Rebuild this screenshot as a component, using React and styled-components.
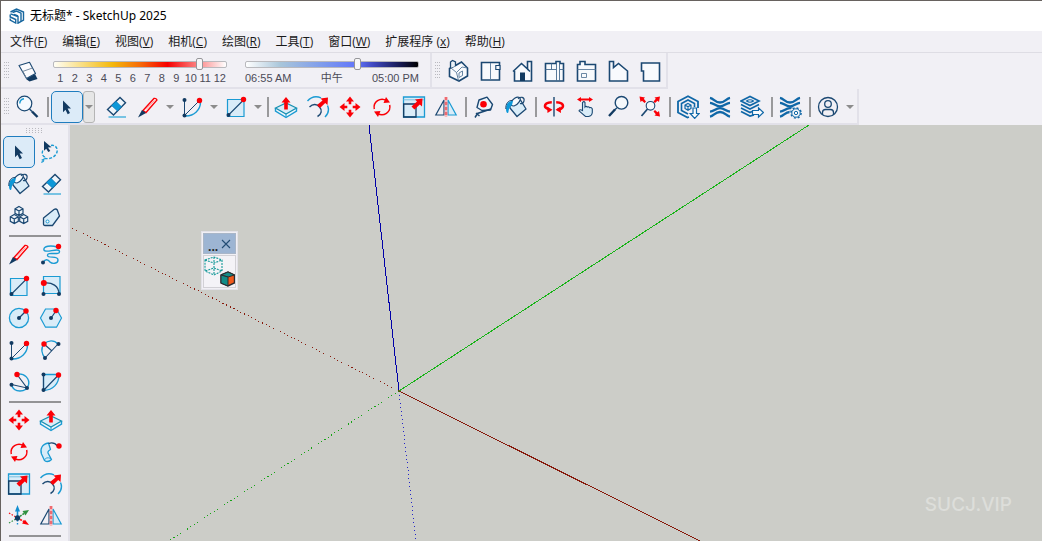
import React, { useState } from "react";
import styled, { createGlobalStyle, css } from "styled-components";

const NAVY = "#1b4872";
const DARK = "#123a61";
const CYAN = "#1b9bd3";
const PALE = "#d9ecf8";
const RED = "#fb0007";
const BLUE = "#0f67a7";

const Global = createGlobalStyle`
  *, *::before, *::after { box-sizing: border-box; }
  html, body { margin: 0; padding: 0; overflow: hidden; }
  button { font: inherit; color: inherit; }
`;

const Shell = styled.div`
  height: 100vh;
  display: flex;
  flex-direction: column;
  overflow: hidden;
  background: #f1f0f5;
  border-top: 1px solid #67625f;
  border-left: 1px solid #67625f;
  color: #1a1a1a;
  font-family: "Open Sans", "Noto Sans CJK SC", sans-serif;
  font-size: 12px;
`;

const TitleBar = styled.header`
  flex: none;
  height: 30px;
  display: flex;
  align-items: center;
  gap: 5px;
  padding-left: 8px;
  background: #fff;
`;

const Title = styled.h1`
  margin: 0;
  font-family: "Noto Sans", "Noto Sans CJK SC", sans-serif;
  font-size: 12px;
  line-height: 16px;
  font-weight: 400;
  color: #000;
`;

const MenuBar = styled.nav`
  flex: none;
  height: 22px;
  display: flex;
  align-items: center;
  gap: 15px;
  padding-left: 9px;
  border-bottom: 1px solid #dedde4;
`;

const MenuItem = styled.button`
  flex: none;
  padding: 0;
  border: 0;
  background: none;
  line-height: 20px;
  white-space: nowrap;
`;

const ToolRow = styled.div`
  flex: none;
  display: flex;
  height: 36px;
`;

const ToolBar = styled.div`
  display: flex;
  align-items: center;
  flex: none;
  border-right: 2px solid #e2e1e9;
  border-bottom: 2px solid #e2e1e9;
  padding-top: 2px;
  padding-right: ${(p) => p.$end || 0}px;
`;

const dots = css`
  background-image: conic-gradient(at 1px 1px, transparent 75%, #b9b9bf 0);
`;

const Grip = styled.span`
  flex: none;
  width: 5px;
  height: 18px;
  margin: 0 2px 0 3px;
  ${dots}
  background-size: 2px 3px;
`;

const SideGrip = styled.span`
  flex: none;
  width: 17px;
  height: 5px;
  margin: 3px auto;
  ${dots}
  background-size: 3px 2px;
`;

const ToolButton = styled.button`
  flex: none;
  display: grid;
  place-items: center;
  width: 32px;
  height: 32px;
  padding: 0;
  border: ${(p) => (p.$active ? "1px solid #1f7dbf" : "0")};
  border-radius: 5px;
  background: ${(p) => (p.$active ? "#dcebf8" : "transparent")};
`;

const MenuArrow = styled.button`
  flex: none;
  display: grid;
  place-items: center;
  width: 12px;
  height: 32px;
  padding: 0;
  border: ${(p) => (p.$boxed ? "1px solid #b5b5b5" : "0")};
  border-radius: 3px;
  background: ${(p) => (p.$boxed ? "#e6e6e6" : "transparent")};
  margin-right: ${(p) => (p.$boxed ? 5 : 0)}px;
  &::after {
    content: "";
    border: 4px solid transparent;
    border-top-color: #8c8c8c;
    border-bottom: 0;
  }
`;

const Divider = styled.span`
  flex: none;
  width: ${(p) => (p.$wide ? 2 : 2)}px;
  height: 20px;
  margin: 0 ${(p) => (p.$wide ? 2 : 1)}px 0 ${(p) => (p.$wide ? 4 : 3)}px;
  background: #99999b;
`;

const Scale = styled.label`
  flex: none;
  width: 174px;
  margin-left: ${(p) => p.$gap}px;
  display: flex;
  flex-direction: column;
  gap: 1px;
  color: #4b4a57;
  font-family: "Liberation Sans", "Noto Sans CJK SC", sans-serif;
  font-size: 11px;
  line-height: 12px;
`;

const Slider = styled.input`
  appearance: none;
  display: block;
  width: 100%;
  height: 12px;
  margin: 0;
  background: none;
  &::-webkit-slider-runnable-track {
    height: 7px;
    border: 1px solid #b9b9bd;
    border-radius: 2px;
    background: ${(p) => p.$track};
  }
  &::-webkit-slider-thumb {
    appearance: none;
    width: 7px;
    height: 12px;
    margin-top: -4px;
    border: 1px solid #96969a;
    border-radius: 2px;
    background: #f7f7f8;
  }
`;

const Marks = styled.span`
  display: flex;
  justify-content: ${(p) => (p.$even ? "stretch" : "space-between")};
  height: 12px;
  white-space: nowrap;
  span { ${(p) => p.$even && "flex: 1 1 0; text-align: center;"} }
`;

const Body = styled.div`
  flex: 1;
  min-height: 0;
  display: flex;
`;

const Sidebar = styled.aside`
  flex: none;
  width: 69px;
  display: flex;
  flex-direction: column;
  overflow: hidden;
  border-right: 2px solid #e2e1e9;
`;

const ToolGrid = styled.div`
  flex: none;
  display: grid;
  grid-template-columns: 32px 32px;
  grid-auto-rows: 32px;
  margin-left: 2px;
`;

const SideRule = styled.hr`
  flex: none;
  width: 52px;
  height: 2px;
  margin: 3px 0 1px 8px;
  border: 0;
  background: #939395;
`;

const Viewport = styled.main`
  position: relative;
  flex: 1;
  min-width: 0;
  overflow: hidden;
  background: #cccdc8;
`;

const Scene = styled.svg`
  display: block;
  width: 100%;
  height: 100%;
`;

const Palette = styled.section`
  position: absolute;
  left: 131px;
  top: 106px;
  width: 37px;
  padding: 1px;
  border: 1px solid #e3e2e8;
  background: #f1f0f5;
`;

const PaletteHead = styled.header`
  display: flex;
  align-items: center;
  justify-content: space-between;
  height: 21px;
  padding: 0 4px;
  background: #9db5d3;
  border: 1px solid #a9b6c8;
  color: #222;
  font-size: 12px;
  line-height: 12px;
  font-weight: 700;
`;

const Ellipsis = styled.span`
  align-self: flex-end;
`;

const CloseButton = styled.button`
  display: grid;
  place-items: center;
  width: 10px;
  height: 12px;
  padding: 0;
  border: 0;
  background: none;
`;

const PaletteTool = styled.button`
  display: block;
  width: 100%;
  height: 33px;
  margin-top: 1px;
  padding: 0;
  border: 1px solid #d2d1d6;
  background: #f4f3f7;
`;

const Watermark = styled.p`
  position: absolute;
  right: 30px;
  bottom: 24px;
  margin: 0;
  color: #dddeda;
  font: 500 19px/24px Inter, sans-serif;
`;

const P = ({ d, s = NAVY, w = 1.4, f = "none", ...rest }) => (
  <path d={d} stroke={s} strokeWidth={w} fill={f} {...rest} />
);
const Dot = ({ x, y, c = DARK, r = 2 }) => <circle cx={x} cy={y} r={r} fill={c} />;
const RDot = ({ x, y }) => <Dot x={x} y={y} c={RED} r={2.7} />;
const Fill = ({ d, c = RED }) => <path d={d} fill={c} />;

const waves = (
  <g stroke={BLUE} strokeWidth="2.300">
    <path d="M2 2.800C6 3.500 7 7.500 12 7.500S18 3.500 22 2.800" />
    <path d="M2 7.800C6 8 7.500 11.300 12 11.300S18 8 22 7.800" />
    <path d="M2 16.700C6 16.500 7.500 13.200 12 13.200S18 16.500 22 16.700" />
    <path d="M2 21.700C6 21 7 17 12 17S18 21 22 21.700" />
  </g>
);

const ICONS = {
  search: <>
    <circle cx="9.500" cy="8.500" r="7.300" stroke={NAVY} strokeWidth="1.200" fill="#f6fafe" />
    <P d="M4.800 8.500A4.800 4.800 0 0 1 9 3.800" s={CYAN} />
    <P d="M14.500 14L17 16.500" /><P d="M17 16.500L22.500 22" w={2.4} s={DARK} />
  </>,
  select: <Fill c={DARK} d="M8 5.500L16 13.500H12.600L15 18L12.700 19.200L10.500 14.700L8 17.200Z" />,
  lasso: <>
    <P d="M12 5.500C16 4.500 19 8 18 12C17 16 12 19.500 7 18.500C5 18 5.500 20 4 21.500C2.500 22.500 1.500 21.500 2.500 20.500C4 19 6 20 5.500 17C3.500 16 2.500 13 4 10" s={CYAN} w={1.4} strokeDasharray="3 1.600" />
    <Fill c={DARK} d="M5 1L12.500 7.300L9 7.500L11.300 11L9.300 12L7.200 8.800L5 10.800Z" />
  </>,
  eraser: <>
    <P d="M3.500 14.500L16 2.500L21.500 7.800L9.500 20Z" f="#eef5fa" />
    <P d="M7.500 10.500L12 6.300L17.500 11.800L13.500 16Z" f="#0c98d8" s="#0c7dbd" w={0.7} />
    <P d="M4.500 22H22" s="#63bbe0" w={1.7} />
  </>,
  pencil: <>
    <P d="M7 15.500L18 3.500Q20 3 21 5L10 17.500Z" s={RED} w={1.4} f="#fff6f6" />
    <P d="M10 14.500L18.500 5.500" s="#fb7479" w={0.7} />
    <Fill c={DARK} d="M2 22.500L6 15L10 18Z" />
  </>,
  arc: <>
    <P d="M4.500 5V20.500M4.500 20.500L19 6" w={1} />
    <P d="M20.500 7C20.500 15 14 21 6 21" s={CYAN} w={1.4} />
    <Dot x={4.5} y={5} /><Dot x={4.5} y={20.5} /><RDot x={19.500} y={5.500} />
  </>,
  rect: <>
    <P d="M3.500 4.500H20V21.500H3.500Z" s={CYAN} w={1.2} f={PALE} />
    <P d="M4.500 20L19 5.500" w={1.1} /><Dot x={4.5} y={20} /><RDot x={19.500} y={4.500} />
  </>,
  push: <>
    <P d="M1.500 13V16L12 22.500L22.500 16V13" s={CYAN} w={1.4} f="#eef6fb" />
    <P d="M1.500 13L12 8L22.500 13L12 19Z" s="#168fb0" f={PALE} w={1.2} />
    <P d="M12 19V22" s={CYAN} w={1} />
    <Fill d="M12 2L16.500 7.500H13.800V14.500H10.200V7.500H7.500Z" />
  </>,
  offset: <>
    <P d="M1.500 6C5 2 10 .8 15 2.800" s={CYAN} w={1.4} /><P d="M21.500 10.500C23.500 15 22 19 19 22" s={CYAN} w={1.4} />
    <P d="M3.500 12C7 8.500 11 9 13.500 12C16.500 15 15.500 19.500 11.500 21.500" w={1.4} />
    <Fill d="M22 2.500L21.500 10L19.200 8L14 13L11 10L16.500 5.500L14.500 3.500Z" />
  </>,
  move: <Fill d="M12 1.500L16 6.500H13.300V9.300H10.700V6.500H8ZM12 22.500L16 17.500H13.300V14.700H10.700V17.500H8ZM1.500 12L6.500 8V10.700H9.300V13.300H6.500V16ZM22.500 12L17.500 8V10.700H14.700V13.300H17.500V16Z" />,
  rotate: <>
    <P d="M4.300 14A8 8 0 0 1 16.500 5.600M19.700 10A8 8 0 0 1 7.500 18.400" s={RED} w={1.5} />
    <Fill d="M16 2L20 7.500L13.500 8ZM8 22L4 16.500L10.500 16Z" />
  </>,
  scale: <>
    <P d="M1.500 2H22.500V22H1.500Z" s={CYAN} w={1.3} f={PALE} />
    <P d="M1.500 4.800H22" s="#79c0df" w={1} />
    <P d="M1.700 9H14V22H1.700Z" s={DARK} w={1.3} />
    <Fill d="M20.500 3.500L20 11.500L17.800 9.500L12.500 14.500L9.500 11.500L15 6.500L13 4.500Z" />
  </>,
  flip: <>
    <P d="M10 5V20H1.800Z" w={1.2} /><P d="M14 5V20H22.200Z" s={CYAN} f={PALE} w={1.2} />
    <P d="M12 2V22" s="#f9b9bd" w={2.6} /><P d="M12 2V22" s="#ef6a70" w={2.6} strokeDasharray="3 2" />
  </>,
  tape: <>
    <P d="M7 5L15 2.200L20.500 9.500L18.500 15L10 15.500L5 12.500Z" w={1.4} f="#edf4fa" strokeLinejoin="round" />
    <P d="M19 14L5.500 18.500L3 22.500M4 18L7.500 21" w={1.5} /><Dot x={11.500} y={9.200} c={RED} r={3.3} />
  </>,
  paint: <>
    <P d="M6 8L16.500 5L22 14L13 21.500L6 13Z" w={1.3} f={PALE} strokeLinejoin="round" />
    <P d="M6.500 8.500C8 4 13 1 15.500 2.500C18 4 14 10 10 11C7.500 11 6 10 6.500 8.500Z" w={1.2} f="#f6fafd" />
    <P d="M14 4C16 1 21 2 20 6C19.500 8 18 9 16 8.500" w={1.1} />
    <Fill c="#0c98d8" d="M9 6C4 6 2 9 2 14C2 18 4 19.500 4.500 16.500C5 13 6 11.500 8 10Z" />
    <P d="M8.500 5.500C4 5 1.500 9 1.800 14" w={1} />
  </>,
  orbit: <>
    <P d="M9.800 7.300C5 7.500 3 9 3 11Q3 13 6.500 14M14.200 7.300C19 7.500 21 9 21 11S18 14.500 15.500 14.600" s={RED} w={2.6} />
    <Fill d="M5 11.500L10.500 14.700L5.500 18ZM19 18L13.500 14.700L18.500 11.500Z" />
    <P d="M12 2V21.500" w={1.4} />
  </>,
  pan: <>
    <P d="M8.500 14.500V7.500Q10 5.800 11 7.500V12Q12 10.800 13.300 12Q14.800 11.300 15.500 12.700Q17.700 12 18.300 14V17.500Q18 21 14.500 21.500H11.500L5 15.800Q5.500 13.800 8.500 15.500Z" w={1.1} f={PALE} />
    <Fill d="M3 4.500L7 2V3.600H15V2L19 4.500L15 7V5.400H7V7Z" />
  </>,
  zoom: <>
    <circle cx="15.500" cy="7.800" r="6.300" stroke={NAVY} strokeWidth="1.400" fill="#f5f8fb" />
    <P d="M10.800 13L8 15.500" /><P d="M9 14.500L3 21" w={2.4} s={DARK} />
  </>,
  extents: <>
    <circle cx="12.500" cy="10.800" r="4.300" stroke={NAVY} strokeWidth="1.100" fill="#f5f8fb" />
    <P d="M9.500 14L3.500 21" w={1.7} />
    <Fill d="M1.500 1.500L7 2.500L5.800 3.800L8 6.500L6.500 8L4 5.700L2.500 7ZM22 1.500L16.500 2.500L17.800 3.800L15.500 6.500L17 8L19.500 5.700L21 7ZM22 21.500L16.500 20.500L17.800 19.200L15.500 16.500L17 15L19.500 17.300L21 16Z" />
  </>,
  warehouse: <>
    <P d="M13 22L11.500 22.500L2 17.500V6.500L12 1.300L22 6.500V13" s={BLUE} w={1.800} />
    <P d="M12 19L5.500 15.500V8.500L12 5L18.500 8.500V12" s={BLUE} w={1.600} />
    <P d="M12 8.500L15 10V13.500L12 15.300L9 13.500V10ZM9 10L12 11.700L15 10M12 11.700V15" s={BLUE} w={1.200} />
    <P d="M17 13H20.500V18.500H23.200L18.700 23.400L14.200 18.500H17Z" s={BLUE} w={1.200} f="#f8fafc" />
  </>,
  extensions: waves,
  layers: <>
    <P d="M1 6L10 1.500L19 6L10 10.500ZM1 9.500L10 14L19 9.500M1 13L10 17.500L12 16.500M1 16.500L10 21L14 20" s={BLUE} w={1.7} />
    <P d="M6.500 6Q10 3.500 13.500 6Q10 8.500 6.500 6Z" s={BLUE} w={1.1} />
    <P d="M12.500 15.500H18.500V12.800L23.400 17.500L18.500 22.200V19.500H12.500Z" s={BLUE} w={1.2} f="#f8fafc" />
  </>,
  manager: <>
    {waves}
    <circle cx="18" cy="18" r="6.500" fill="#f1f0f5" />
    <circle cx="18" cy="18" r="5.100" stroke={BLUE} strokeWidth="1.500" strokeDasharray="2 2" fill="none" />
    <circle cx="18" cy="18" r="4.200" stroke={BLUE} strokeWidth="1" fill="#f5f8fb" />
    <circle cx="18" cy="18" r="1.700" stroke={BLUE} strokeWidth="1" fill="none" />
  </>,
  user: <>
    <circle cx="12" cy="12" r="9.500" stroke={NAVY} strokeWidth="1.300" fill="none" />
    <circle cx="12" cy="9" r="3.300" stroke={NAVY} strokeWidth="1.300" fill="none" />
    <P d="M6.500 19V17.500Q6.500 14.500 9.500 14.500H14.500Q17.500 14.500 17.500 17.500V19" w={1.300} />
  </>,
  shadow: <>
    <Fill c={DARK} d="M11 20L20 15L22.500 20L14.500 22.500Z" />
    <P d="M4 6.500L14.500 3.200L20.500 14.500L11.500 19.500Z" w={1.1} f="#fbfbfd" strokeLinejoin="round" />
    <P d="M7.500 12.500L17.500 9M8 12.500L11.500 19.500" s="#6a7f96" w={0.9} />
  </>,
  iso: <>
    <P d="M3.500 9.500L9.500 6.500L15.500 3L21.500 9V17L13 22L3.500 17.500Z" w={1.6} f="#f8fafd" />
    <P d="M4.500 9V3L6.500 1.500L9.500 3V7" w={1.3} f="#eaf1f7" />
    <P d="M5 9L10.500 13.500L16 8L21 9M10.500 13.500L12.500 21.500M13 14V18.500L16.500 16.500V12Z" s="#567899" w={0.9} />
  </>,
  top: <>
    <P d="M3.500 3.500H21.500V21H3.500Z" w={1.6} f="#f8fafd" /><P d="M12.500 4V21" s="#5a7b9b" w={0.9} />
    <P d="M17.800 6.500H22V10.500H17.800Z" w={1.1} f="#f8fafd" />
  </>,
  front: <>
    <P d="M3 12.500L11.500 4.500L17.500 10V2.500H21.500V22H4.500V12" w={1.6} f="#f8fafd" />
    <P d="M17.500 10L20 12.500" /><Fill c={DARK} d="M10 13.500H15V22H10Z" />
  </>,
  right: <>
    <P d="M3.500 4.500H14V2.500H18V4.500H21.500V22H3.500Z" w={1.6} f="#f8fafd" />
    <P d="M3.500 10.500H14M9.500 4.500V10.500M14.500 4V22M17.500 4V22M18 10.500H21.500" s="#466b8e" w={0.9} />
  </>,
  back: <>
    <P d="M3.500 5.500H6V2.500H11V5.500H21.500V22H3.500Z" w={1.6} f="#f8fafd" />
    <P d="M3.500 10.500H21.500M7.500 14.500H12.500V18.500H7.500Z" s="#5a7b9b" w={0.9} />
  </>,
  left: <P d="M3.500 22V2.500H7.500V8.500L12.500 4.500L21.500 12V22Z" w={1.6} f="#f8fafd" />,
  bottom: <P d="M3.500 4H21.500V22H5.500V12H3.500Z" w={1.6} f="#f8fafd" />,
  components: <>
    {[[12, 2.500], [7.300, 10.500], [16.700, 10.500]].map(([x, y]) => (
      <P key={x} d={`M${x} ${y}l4 2.300v4.500l-4 2.300l-4-2.300v-4.500zM${x - 4} ${y + 2.300}l4 2.300l4-2.300M${x} ${y + 4.600}v4.500`} w={1.2} f="#edf4fa" />
    ))}
  </>,
  tag: <>
    <P d="M4.500 14L15 5.500Q17 4.300 18.300 6L20.500 12L13.500 21.500L6 21.500Q4.500 21.500 4.500 20Z" w={1.3} f={PALE} strokeLinejoin="round" />
    <circle cx="8.500" cy="17.500" r="1.500" stroke={CYAN} fill="#fff" />
  </>,
  freehand: <>
    <P d="M18 5C12 3 4 4 5 8C6 12 20 5 20.500 9.500C21 14 8 9 8.500 13.500C9 17 19 13 19 18C19 22 13 22 11 20C9 17 6 17 4.500 20" s={CYAN} w={1.4} />
    <Dot x={4} y={20.500} /><RDot x={19.500} y={4.500} />
  </>,
  rotrect: <>
    <P d="M4.500 2.500H21V19.500H4.500Z" s={CYAN} f={PALE} w={1.200} /><P d="M5 9C13 8 20 12 20 20" w={1.3} />
    <Dot x={4.5} y={20} /><Dot x={20} y={20} /><Dot x={4.8} y={9} c={RED} r={3} />
  </>,
  circle: <>
    <circle cx="12" cy="12" r="9.600" stroke={CYAN} strokeWidth="1.300" fill={PALE} />
    <P d="M12 12L19 5" w={1.200} /><Dot x={12} y={12} /><RDot x={19} y={5} />
  </>,
  polygon: <>
    <P d="M6.500 3H17.500L22.500 12L17.500 21.200H6.500L1.500 12Z" s={CYAN} f={PALE} w={1.200} />
    <P d="M12 12L17 5" w={1.200} /><Dot x={12} y={12} /><RDot x={17} y={4.500} />
  </>,
  arc2: <>
    <P d="M19 6C15 1.500 9 2 5 6C1.500 10 2.500 16 6 20" s={CYAN} w={1.300} />
    <P d="M19 6L6 20M5 6L13 13" w={1.1} /><RDot x={5} y={6} /><Dot x={19.500} y={6} /><Dot x={6} y={20} />
  </>,
  arc3: <>
    <P d="M10 4C18 3 23 9 21.500 15C19 23 7 23 4.500 15" s={CYAN} w={1.4} />
    <P d="M4.500 14.500L20 18L10 4.500" w={1.1} /><RDot x={10} y={4.500} /><Dot x={4.500} y={14.800} /><Dot x={20} y={18} />
  </>,
  pie: <>
    <P d="M4.500 4.500H20C20 14 14 20 4.500 20.500Z" s={CYAN} w={1.3} f={PALE} />
    <P d="M4.500 4.500V20.500L19.500 5" w={1.2} /><Dot x={4.500} y={4.500} /><Dot x={4.500} y={20} /><RDot x={19.500} y={5} />
  </>,
  follow: <>
    <P d="M9.500 3C3 4 .8 9 2.500 14L5.500 20.500Q9 23 12.500 19.500L9 13Q8.500 11 11.500 9.500Z" s={CYAN} f={PALE} w={1.300} strokeLinejoin="round" />
    <P d="M5.500 20Q7 16.500 12 18.500" s={CYAN} w={0.9} />
    <P d="M9.500 3.500Q15 1.500 18.500 6" w={1.3} /><Dot x={20} y={6} c={RED} r={2.7} />
  </>,
  axes: <>
    <P d="M10.500 14V7" s="#148ed0" w={1.6} /><Fill c="#148ed0" d="M10.500 1L13 7.500H8Z" />
    <P d="M10.500 14L17 9.500" s="#2f9140" w={1.6} strokeDasharray="2 1" /><Fill c="#2f9140" d="M22 6L18.500 11.500L15.500 7Z" />
    <P d="M10.500 14L17 17.500" s={RED} w={1.6} strokeDasharray="2 1" /><Fill d="M22 21L15 19.500L18 15.800Z" />
    <P d="M2 9L9 13" s={RED} w={1.2} strokeDasharray="1.500 1.500" />
    <P d="M2 19L9 15" s="#2f9140" w={1.2} strokeDasharray="1.500 1.500" />
    <P d="M10.500 16V22" s="#148ed0" w={1.4} strokeDasharray="1.500 1.500" />
    <Dot x={10.500} y={14} r={2.700} />
  </>,
};

const Icon = ({ name }) => (
  <svg width="24" height="24" viewBox="0 0 24 24" fill="none" aria-hidden="true">{ICONS[name]}</svg>
);

const Logo = () => (
  <svg width="16" height="16" viewBox="0 0 16 16" fill="none" stroke="#17679f" strokeWidth="1.400" aria-hidden="true">
    <path d="M1.500 4L7.500 1L14.500 4V12L9 15.200V8.500L1.500 5.800" />
    <path d="M3.500 4.500L7.500 3L12 5.200V13.500" />
    <path d="M1.200 6.500V9L6.700 11.500V15L1.200 12V10.500" />
    <path d="M9 8L5 6.500" />
  </svg>
);

const MENUS = [
  ["文件(", "F"], ["编辑(", "E"], ["视图(", "V"], ["相机(", "C"], ["绘图(", "R"],
  ["工具(", "T"], ["窗口(", "W"], ["扩展程序 (", "x"], ["帮助(", "H"],
];

const VIEWS = ["iso", "top", "front", "right", "back", "left", "bottom"];

const MAIN_TOOLS = [
  "search", "||", "select", "vv", "eraser", "pencil", "v", "arc", "v", "rect", "v", "|",
  "push", "offset", "move", "rotate", "scale", "flip", "|", "tape", "paint", "|",
  "orbit", "pan", "zoom", "extents", "|", "warehouse", "extensions", "layers", "|",
  "manager", "|", "user", "v",
];

const SIDE_GROUPS = [
  ["select", "lasso", "paint", "eraser", "components", "tag"],
  ["pencil", "freehand", "rect", "rotrect", "circle", "polygon", "arc", "arc2", "arc3", "pie"],
  ["move", "push", "rotate", "follow", "scale", "offset", "axes", "flip"],
];

const MONTHS = Array.from({ length: 12 }, (_, i) => i + 1);

export default function App() {
  const [tool, setTool] = useState("select");
  const button = (name) => (
    <ToolButton key={name} type="button" aria-label={name} $active={tool === name} onClick={() => setTool(name)}>
      <Icon name={name} />
    </ToolButton>
  );

  return (
    <>
      <Global />
      <Shell>
        <TitleBar><Logo /><Title>无标题* - SketchUp 2025</Title></TitleBar>
        <MenuBar>
          {MENUS.map(([text, key]) => (
            <MenuItem key={key} type="button">{text}<u>{key}</u>)</MenuItem>
          ))}
        </MenuBar>
        <ToolRow>
          <ToolBar $end={11}>
            <Grip />
            {button("shadow")}
            <Scale $gap={10}>
              <Slider type="range" min="0" max="1000" defaultValue="860" aria-label="month"
                $track="linear-gradient(90deg,#fffef5,#f9dd7e 17%,#f4b80b 34%,#f66b08 50%,#f70000 66%,#fb7a7a 82%,#fff)" />
              <Marks $even>{MONTHS.map((m) => <span key={m}>{m}</span>)}</Marks>
            </Scale>
            <Scale $gap={18}>
              <Slider type="range" min="0" max="1000" defaultValue="653" aria-label="time"
                $track="linear-gradient(90deg,#fff,#a9c6da 20%,#7f9cec 44%,#6276fa 64%,#4049c0 74%,#16194f 90%,#000)" />
              <Marks><span>06:55 AM</span><span>中午</span><span>05:00 PM</span></Marks>
            </Scale>
          </ToolBar>
          <ToolBar>
            <Grip />
            {VIEWS.map(button)}
          </ToolBar>
        </ToolRow>
        <ToolRow>
          <ToolBar $end={1}>
            <Grip />
            {MAIN_TOOLS.map((t, i) => {
              if (t[0] === "|") return <Divider key={i} $wide={t === "||"} />;
              if (t[0] === "v") return <MenuArrow key={i} type="button" aria-label="more" $boxed={t === "vv"} />;
              return button(t);
            })}
          </ToolBar>
        </ToolRow>
        <Body>
          <Sidebar>
            <SideGrip />
            {SIDE_GROUPS.map((group, i) => (
              <React.Fragment key={i}>
                <ToolGrid>{group.map(button)}</ToolGrid>
                <SideRule />
              </React.Fragment>
            ))}
          </Sidebar>
          <Viewport>
            <Scene shapeRendering="crispEdges" aria-hidden="true">
              <g transform="translate(329 266)" strokeWidth="1">
                <path d="M0 0L-30 -266" stroke="#0000a8" />
                <path d="M0 0L17 150" stroke="#2424c8" strokeDasharray="1 3" />
                <path d="M0 0L410 -266" stroke="#17b317" />
                <path d="M0 0L-230 150" stroke="#17a317" strokeDasharray="1 3" />
                <path d="M0 0L301 150" stroke="#871a0c" />
                <path d="M0 0L-329 -164" stroke="#871a0c" strokeDasharray="1 3" />
              </g>
            </Scene>
            <Palette>
              <PaletteHead>
                <Ellipsis>...</Ellipsis>
                <CloseButton type="button" aria-label="close">
                  <svg width="10" height="10" viewBox="0 0 10 10" stroke="#234c74" strokeWidth="1.100"><path d="M1 1L9 9M9 1L1 9" /></svg>
                </CloseButton>
              </PaletteHead>
              <PaletteTool type="button" aria-label="solid">
                <svg width="31" height="31" viewBox="0 0 31 31" fill="none">
                  <path d="M1 4L10 1L18 4V15L10 19L1 15ZM1 4L10 7L18 4M10 7V19M10 1V12L1 15M10 12L18 15" stroke="#159999" strokeWidth="1.100" strokeDasharray="2 1" />
                  <path d="M17 19L24 16L30.500 19V27L24 30L17 27Z" fill="#f15a1c" stroke="#2c2c30" strokeWidth="1.400" />
                  <path d="M17 19L24 16L30.500 19L24 21Z" fill="#128c87" stroke="#2c2c30" />
                  <path d="M17 19L24 21V30L17 27Z" fill="#128c87" stroke="#2c2c30" />
                </svg>
              </PaletteTool>
            </Palette>
            <Watermark>SUCJ.VIP</Watermark>
          </Viewport>
        </Body>
      </Shell>
    </>
  );
}
